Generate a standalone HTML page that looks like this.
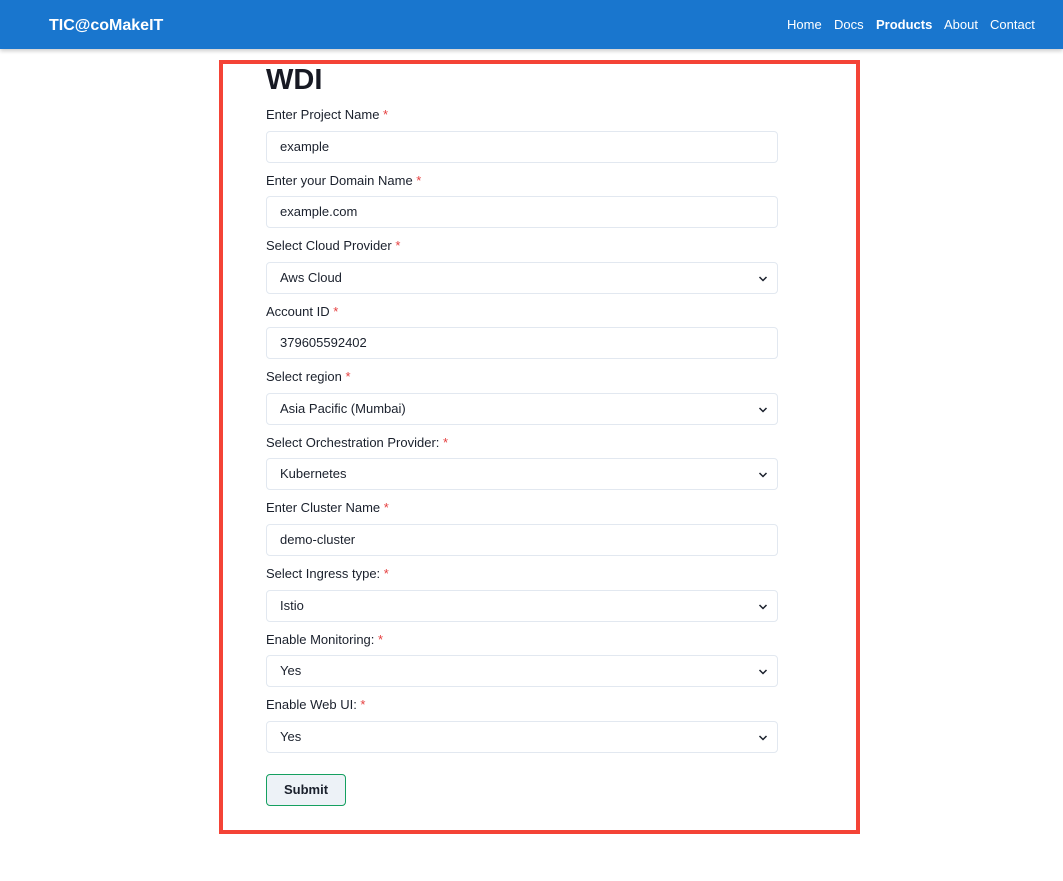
<!DOCTYPE html>
<html><head><meta charset="utf-8"><style>
*{box-sizing:border-box;margin:0;padding:0}
body{width:1063px;height:881px;background:#fff;font-family:"Liberation Sans",sans-serif;position:relative;overflow:hidden;color:#1a202c}
.hdr{position:absolute;left:0;top:0;width:1063px;height:49px;background:#1976ce;box-shadow:0 2px 4px rgba(0,0,0,.2)}
.logo{position:absolute;left:49px;top:17px;color:#fff;font-weight:bold;font-size:16px}
.nav{position:absolute;top:17px;color:#fff;font-size:13px}
.box{position:absolute;left:219px;top:60px;width:641px;height:774px;border:4px solid #f44336}
h1{position:absolute;left:266px;top:64px;font-size:29px;font-weight:bold;color:#171923}
.lb{position:absolute;left:266px;font-size:13px;color:#1a202c}
.lb span{color:#e53e3e}
.in{position:absolute;left:266px;width:512px;height:32px;border:1px solid #e2e8f0;border-radius:4px;font-size:13px;padding:7px 13px;color:#1a202c}
.in svg{position:absolute;right:9px;top:12px}
.btn{position:absolute;left:266px;top:774px;width:80px;height:32px;border:1px solid #15a060;border-radius:4px;background:#edf2f7;font-weight:bold;font-size:13px;text-align:center;line-height:30px;color:#1a202c}
</style></head><body>
<div class="hdr">
<div class="logo">TIC@coMakeIT</div>
<div class="nav" style="left:787px">Home</div>
<div class="nav" style="left:834px">Docs</div>
<div class="nav" style="left:876px;font-weight:bold">Products</div>
<div class="nav" style="left:944px">About</div>
<div class="nav" style="left:990px">Contact</div>
</div>
<div class="box"></div>
<h1>WDI</h1>

<div class="lb" style="top:107px">Enter Project Name <span>*</span></div>
<div class="in" style="top:131px">example</div>
<div class="lb" style="top:173px">Enter your Domain Name <span>*</span></div>
<div class="in" style="top:196px">example.com</div>
<div class="lb" style="top:238px">Select Cloud Provider <span>*</span></div>
<div class="in" style="top:262px">Aws Cloud<svg width="10" height="8" viewBox="0 0 10 8"><path d="M1.5 2l3.5 3.5L8.5 2" fill="none" stroke="#1a202c" stroke-width="1.5"/></svg></div>
<div class="lb" style="top:304px">Account ID <span>*</span></div>
<div class="in" style="top:327px">379605592402</div>
<div class="lb" style="top:369px">Select region <span>*</span></div>
<div class="in" style="top:393px">Asia Pacific (Mumbai)<svg width="10" height="8" viewBox="0 0 10 8"><path d="M1.5 2l3.5 3.5L8.5 2" fill="none" stroke="#1a202c" stroke-width="1.5"/></svg></div>
<div class="lb" style="top:435px">Select Orchestration Provider: <span>*</span></div>
<div class="in" style="top:458px">Kubernetes<svg width="10" height="8" viewBox="0 0 10 8"><path d="M1.5 2l3.5 3.5L8.5 2" fill="none" stroke="#1a202c" stroke-width="1.5"/></svg></div>
<div class="lb" style="top:500px">Enter Cluster Name <span>*</span></div>
<div class="in" style="top:524px">demo-cluster</div>
<div class="lb" style="top:566px">Select Ingress type: <span>*</span></div>
<div class="in" style="top:590px">Istio<svg width="10" height="8" viewBox="0 0 10 8"><path d="M1.5 2l3.5 3.5L8.5 2" fill="none" stroke="#1a202c" stroke-width="1.5"/></svg></div>
<div class="lb" style="top:632px">Enable Monitoring: <span>*</span></div>
<div class="in" style="top:655px">Yes<svg width="10" height="8" viewBox="0 0 10 8"><path d="M1.5 2l3.5 3.5L8.5 2" fill="none" stroke="#1a202c" stroke-width="1.5"/></svg></div>
<div class="lb" style="top:697px">Enable Web UI: <span>*</span></div>
<div class="in" style="top:721px">Yes<svg width="10" height="8" viewBox="0 0 10 8"><path d="M1.5 2l3.5 3.5L8.5 2" fill="none" stroke="#1a202c" stroke-width="1.5"/></svg></div>
<div class="btn">Submit</div>
</body></html>
